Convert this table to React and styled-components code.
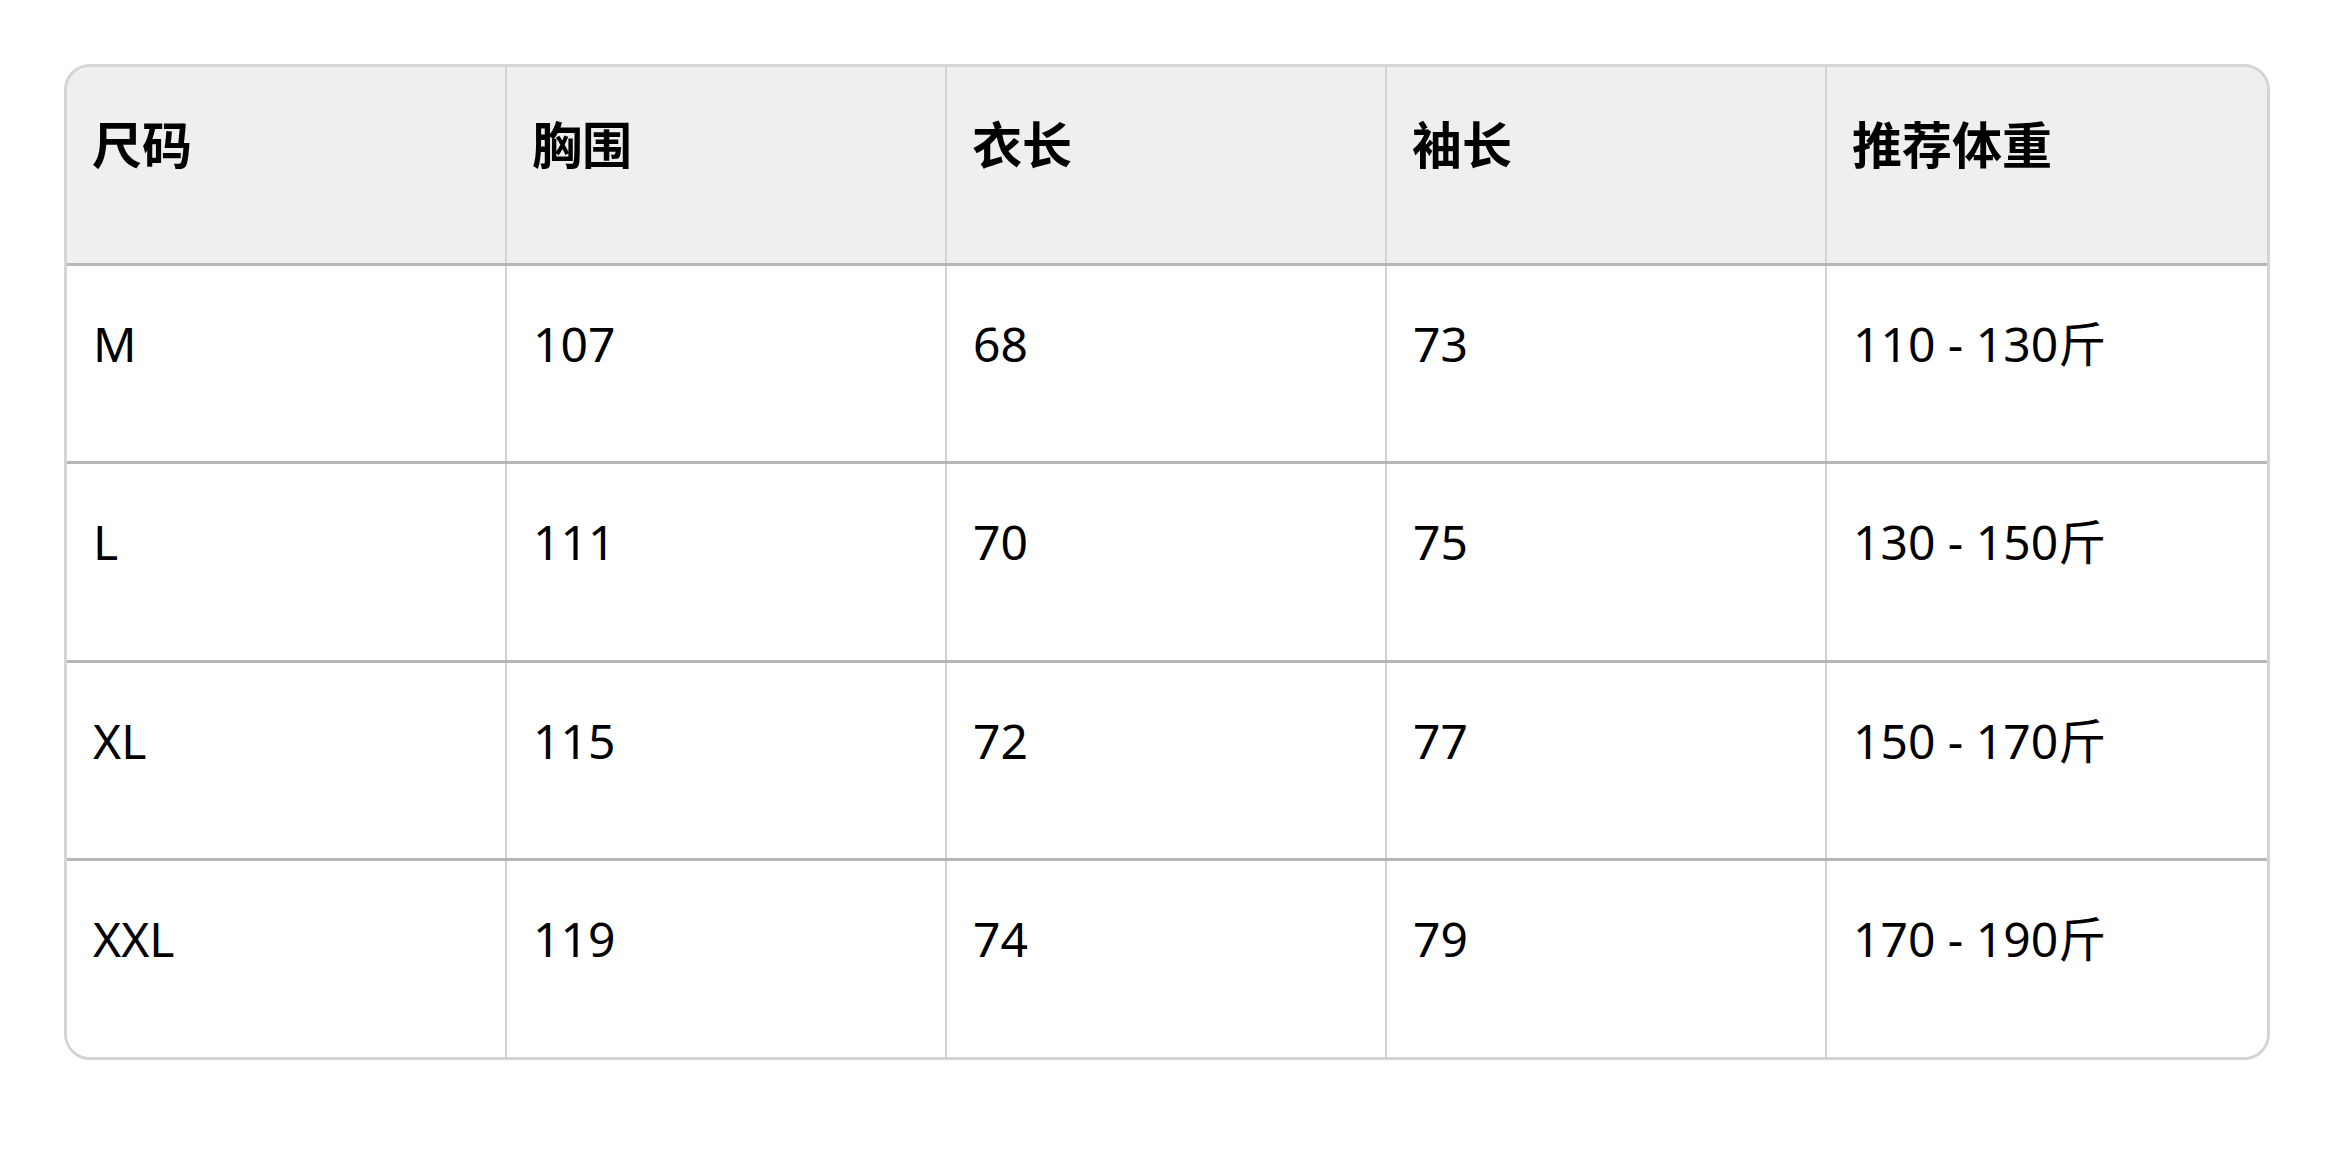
import React from 'react';
import styled, { createGlobalStyle } from 'styled-components';

const GlobalStyle = createGlobalStyle`
  html, body {
    margin: 0;
    padding: 0;
    background: #ffffff;
  }
  body {
    font-family: "Noto Sans", "Noto Sans CJK SC", sans-serif;
    color: #000;
  }
`;

const Page = styled.div`
  padding: 64px;
`;

const TableFrame = styled.div`
  border: 3px solid #d4d4d4;
  border-radius: 26px;
  overflow: hidden;
  background: #fff;
`;

const Row = styled.div`
  display: grid;
  grid-template-columns: repeat(5, 1fr);
  height: ${props => (props.last ? '195.5px' : '198.5px')};
  box-sizing: border-box;
  background: ${props => (props.head ? '#efefef' : '#ffffff')};
  border-bottom: ${props => (props.last ? 'none' : '3px solid #b6b6b6')};
`;

const Cell = styled.div`
  box-sizing: border-box;
  padding: ${props => (props.head ? '42px 25px 0 25px' : '42px 25px 0 26px')};
  font-size: ${props => (props.head ? '50px' : '48px')};
  line-height: 72px;
  font-weight: ${props => (props.head ? 700 : 400)};
  color: #000;
  white-space: nowrap;
  border-right: 2px solid #d2d2d2;

  &:last-child {
    border-right: none;
  }
`;

const headers = ['尺码', '胸围', '衣长', '袖长', '推荐体重'];

const sizes = [
  ['M', '107', '68', '73', '110 - 130斤'],
  ['L', '111', '70', '75', '130 - 150斤'],
  ['XL', '115', '72', '77', '150 - 170斤'],
  ['XXL', '119', '74', '79', '170 - 190斤'],
];

const App = () => {
  return (
    <>
      <GlobalStyle />
      <Page>
        <TableFrame>
          <Row head>
            {headers.map(h => (
              <Cell head key={h}>{h}</Cell>
            ))}
          </Row>
          {sizes.map((row, i) => (
            <Row key={row[0]} last={i === sizes.length - 1}>
              {row.map((v, j) => (
                <Cell key={j}>{v}</Cell>
              ))}
            </Row>
          ))}
        </TableFrame>
      </Page>
    </>
  );
};

export default App;
